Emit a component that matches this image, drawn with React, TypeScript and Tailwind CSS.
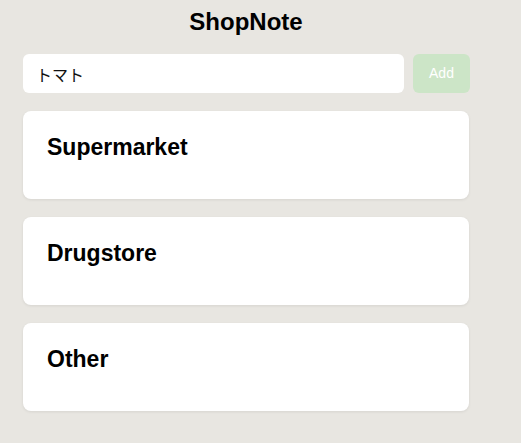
const STORES = ["Supermarket", "Drugstore", "Other"];

function StoreCard({ name }: { name: string }) {
  return (
    <div className="h-[88px] rounded-lg bg-white px-6 pt-[22px] shadow-[0_1px_3px_rgba(0,0,0,0.08)]">
      <h2 className="text-[23px] font-bold leading-[28px] text-black">{name}</h2>
    </div>
  );
}

export default function App() {
  return (
    <div
      className="min-h-[443px] bg-[#e8e6e1] pt-2"
      style={{ fontFamily: '"Liberation Sans", Arial, "Noto Sans CJK JP", sans-serif' }}
    >
      <div className="ml-[23px] w-[446px]">
        <h1 className="text-center text-[24px] font-bold leading-[28px] text-black">
          ShopNote
        </h1>
        <div className="mt-[18px] flex w-[447px] gap-[9px]">
          <input
            className="h-[39px] min-w-0 flex-1 rounded-md bg-white px-[13px] text-[16px] text-[#111] outline-none"
            defaultValue="トマト"
          />
          <button
            disabled
            className="h-[39px] w-[57px] shrink-0 rounded-md bg-[#cce5c7] text-[14px] text-white"
          >
            Add
          </button>
        </div>
        <div className="mt-[18px] flex flex-col gap-[18px]">
          {STORES.map((name) => (
            <StoreCard key={name} name={name} />
          ))}
        </div>
      </div>
    </div>
  );
}
